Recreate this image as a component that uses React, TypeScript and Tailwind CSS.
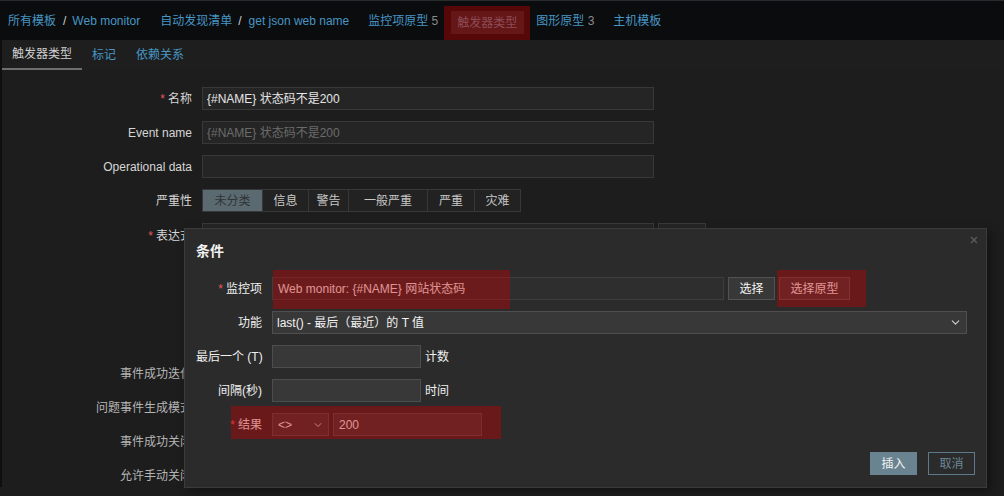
import { ChevronDown, X } from "lucide-react";

const font = "font-['Liberation_Sans','Noto_Sans_CJK_SC',sans-serif]";

function Star() {
  return <span className="mr-[3px] text-[#e45959]">*</span>;
}

function FormRow({ label, star, dim, children }: { label: string; star?: boolean; dim?: boolean; children?: React.ReactNode }) {
  return (
    <div className="mb-[11px] flex h-[23px] items-center gap-[10px]">
      <div className={`w-[190px] shrink-0 text-right ${dim ? "text-[#b4b4b4]" : "text-[#d6d6d6]"}`}>
        {star && <Star />}
        {label}
      </div>
      {children}
    </div>
  );
}

const severities = [
  { name: "未分类", w: "w-[60px]", active: true },
  { name: "信息", w: "w-[46px]" },
  { name: "警告", w: "w-[40px]" },
  { name: "一般严重", w: "w-[79px]" },
  { name: "严重", w: "w-[47px]" },
  { name: "灾难", w: "w-[46px]" },
];

function DialogRow({ label, star, children }: { label: string; star?: boolean; children?: React.ReactNode }) {
  return (
    <div className="mb-[11px] flex h-[23px] items-center gap-[10px]">
      <div className="w-[66px] shrink-0 whitespace-nowrap text-right text-[#f0f0f0]">
        {star && <Star />}
        {label}
      </div>
      <div className="flex items-center">{children}</div>
    </div>
  );
}

export default function App() {
  return (
    <div className={`relative h-[496px] w-[1004px] overflow-hidden bg-[#1d1d1d] text-[12px] ${font}`}>
      {/* top navigation */}
      <div className="flex h-[40px] items-center border-t border-[#2a2b2e] bg-[#0b0c0e] pl-[8px] text-[#4796c4]">
        <span>所有模板</span>
        <span className="ml-[7px] text-[#d0d0d0]">/</span>
        <span className="ml-[6px]">Web monitor</span>
        <span className="ml-[20px]">自动发现清单</span>
        <span className="ml-[6px] text-[#d0d0d0]">/</span>
        <span className="ml-[7px]">get json web name</span>
        <span className="ml-[19px]">
          监控项原型 <span className="text-[#8a8a8a]">5</span>
        </span>
        <div className="relative ml-[6px] flex h-[34px] w-[86px] self-end items-start justify-center pt-[5px]">
          <div className="flex h-[23px] w-[73px] items-center justify-center bg-[#242526] text-[#667f90]">触发器类型</div>
          <div className="pointer-events-none absolute inset-0 bg-[#c8000066]" />
        </div>
        <span className="ml-[6px]">
          图形原型 <span className="text-[#8a8a8a]">3</span>
        </span>
        <span className="ml-[19px]">主机模板</span>
      </div>

      <div className="border-l-2 border-[#0f0f0f]">
        {/* tabs */}
        <div className="flex h-[30px] bg-[#1e1e1e]">
          <div className="flex items-center border-b-2 border-[#6e6e6e] pl-[10px] pr-[10px] text-[#d0d0d0]">触发器类型</div>
          <div className="flex items-center px-[10px] text-[#4796c4]">标记</div>
          <div className="flex items-center px-[10px] text-[#4796c4]">依赖关系</div>
        </div>

        {/* form */}
        <div className="pt-[17px]">
          <FormRow label="名称" star>
            <div className="flex h-[23px] w-[452px] items-center border border-[#383838] bg-[#252525] px-[4px] text-[#e6e6e6]">
              {"{#NAME} 状态码不是200"}
            </div>
          </FormRow>
          <FormRow label="Event name">
            <div className="flex h-[23px] w-[452px] items-center border border-[#383838] bg-[#252525] px-[4px] text-[#6c6c6c]">
              {"{#NAME} 状态码不是200"}
            </div>
          </FormRow>
          <FormRow label="Operational data">
            <div className="h-[23px] w-[452px] border border-[#383838] bg-[#252525]" />
          </FormRow>
          <FormRow label="严重性">
            <div className="flex h-[23px] border-r border-[#383838]">
              {severities.map((s) => (
                <div
                  key={s.name}
                  className={`flex h-[23px] items-center justify-center border-y border-l border-[#383838] ${s.w} ${
                    s.active ? "bg-[#5b6a71] text-[#2f3437]" : "bg-[#222222] text-[#c8c8c8]"
                  }`}
                >
                  {s.name}
                </div>
              ))}
            </div>
          </FormRow>
          <div className="mb-[11px] flex h-[128px] gap-[10px]">
            <div className="w-[190px] shrink-0 pt-[4px] text-right text-[#d6d6d6]">
              <Star />
              表达式
            </div>
            <div className="h-[128px] w-[452px] border border-[#383838] bg-[#252525]" />
            <div className="ml-[-6px] h-[23px] w-[48px] border border-[#383838] bg-[#252525]" />
          </div>
          <FormRow label="事件成功迭代" dim />
          <FormRow label="问题事件生成模式" dim />
          <FormRow label="事件成功关闭" dim />
          <FormRow label="允许手动关闭" dim />
        </div>
      </div>

      {/* condition dialog */}
      <div className="absolute left-[184px] top-[228px] h-[260px] w-[803px] border border-[#3b3b3b] bg-[#2b2b2b] pl-[11px] pr-[11px] shadow-[4px_4px_10px_rgba(0,0,0,0.35)]">
        <X className="absolute right-[7px] top-[6px] text-[#595959]" size={10} strokeWidth={3.5} />
        <div className="pt-[12px] text-[14px] font-bold leading-[20px] text-[#f2f2f2]">条件</div>
        <div className="mt-[16px]">
          <DialogRow label="监控项" star>
            <div className="flex h-[23px] w-[452px] items-center border border-[#3e3e3e] bg-[#2e2e2e] px-[5px] text-[#f2f2f2]">
              {"Web monitor: {#NAME} 网站状态码"}
            </div>
            <div className="ml-[4px] flex h-[23px] w-[47px] items-center justify-center border border-[#525252] bg-[#383838] text-[#f4f4f4]">选择</div>
            <div className="ml-[4px] flex h-[23px] w-[71px] items-center justify-center border border-[#525252] bg-[#383838] text-[#f4f4f4]">选择原型</div>
          </DialogRow>
          <DialogRow label="功能">
            <div className="relative flex h-[23px] w-[695px] items-center border border-[#4f4f4f] bg-[#383838] px-[4px] text-[#f2f2f2]">
              last() - 最后（最近）的 T 值
              <ChevronDown className="absolute right-[4px] text-[#d0d0d0]" size={13} />
            </div>
          </DialogRow>
          <DialogRow label="最后一个 (T)">
            <div className="h-[23px] w-[149px] border border-[#4d4d4d] bg-[#383838]" />
            <span className="ml-[4px] text-[#f0f0f0]">计数</span>
          </DialogRow>
          <DialogRow label="间隔(秒)">
            <div className="h-[23px] w-[149px] border border-[#4d4d4d] bg-[#383838]" />
            <span className="ml-[4px] text-[#f0f0f0]">时间</span>
          </DialogRow>
          <DialogRow label="结果" star>
            <div className="relative flex h-[23px] w-[57px] items-center border border-[#4d4d4d] bg-[#383838] px-[5px] text-[#f2f2f2]">
              {"<>"}
              <ChevronDown className="absolute right-[4px] text-[#d0d0d0]" size={12} />
            </div>
            <div className="ml-[4px] flex h-[23px] w-[149px] items-center border border-[#4d4d4d] bg-[#383838] px-[5px] text-[#f2f2f2]">200</div>
          </DialogRow>
        </div>
        <div className="mt-[16px] flex justify-end gap-[11px]">
          <div className="flex h-[23px] w-[47px] items-center justify-center border border-[#6a8391] bg-[#6a8391] text-[#f2f2f2]">插入</div>
          <div className="flex h-[23px] w-[47px] items-center justify-center border border-[#5e7a8a] text-[#6c8797]">取消</div>
        </div>

        {/* highlight marks */}
        <div className="pointer-events-none absolute left-[88px] top-[41px] h-[39px] w-[237px] bg-[#c8000066]" />
        <div className="pointer-events-none absolute left-[592px] top-[41px] h-[37px] w-[89px] bg-[#c8000066]" />
        <div className="pointer-events-none absolute left-[46px] top-[177px] h-[33px] w-[270px] bg-[#c8000066]" />
      </div>
    </div>
  );
}
